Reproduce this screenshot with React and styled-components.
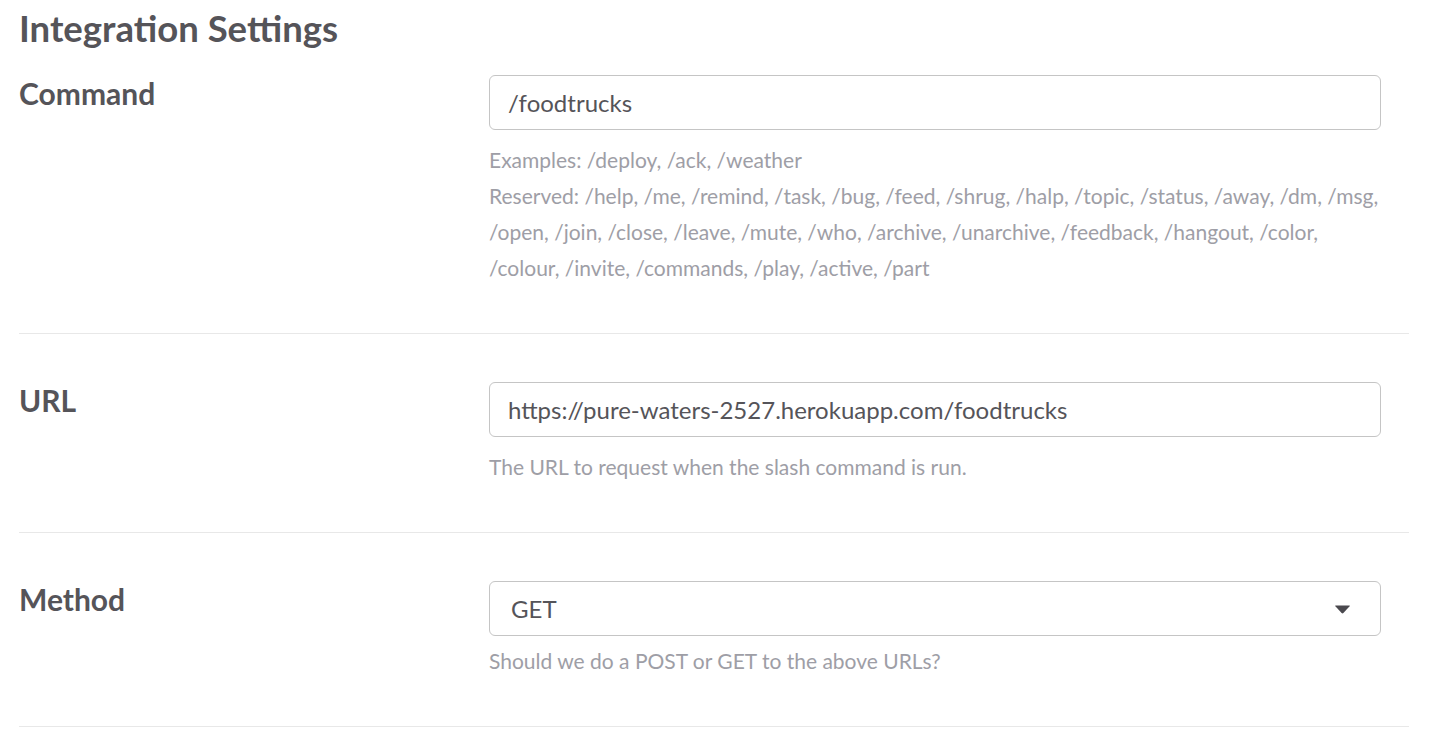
import React from "react";
import styled, { createGlobalStyle } from "styled-components";

const GlobalStyle = createGlobalStyle`
  body {
    margin: 0;
    background: #ffffff;
    font-family: Lato, "Open Sans", "Liberation Sans", sans-serif;
    color: #555459;
  }
`;

const Page = styled.div`
  padding: 6px 20px 0 19px;
`;

const Title = styled.h1`
  margin: 0 0 25px;
  font-size: 36.5px;
  font-weight: 700;
  line-height: normal;
  color: #555459;
`;

const Section = styled.div`
  display: grid;
  grid-template-columns: 470px 1fr;
  padding: ${(p) => (p.first ? "0" : "48px")} 0 47px;
  border-bottom: 1px solid #e8e8e8;
`;

const Label = styled.h2`
  margin: 0;
  font-size: 30px;
  font-weight: 700;
  line-height: normal;
  color: #555459;
`;

const Field = styled.div`
  padding-right: 28px;
  min-width: 0;
`;

const TextInput = styled.input`
  display: block;
  box-sizing: border-box;
  width: 100%;
  height: 55px;
  padding: 0 18px;
  border: 1px solid #c5c5c5;
  border-radius: 6px;
  background: #ffffff;
  font-family: inherit;
  font-size: 24px;
  color: #555459;
  outline: none;
`;

const SelectWrap = styled.div`
  position: relative;
`;

const Select = styled.select`
  display: block;
  box-sizing: border-box;
  width: 100%;
  height: 55px;
  padding: 0 21px;
  border: 1px solid #c5c5c5;
  border-radius: 6px;
  background: #ffffff;
  font-family: inherit;
  font-size: 24px;
  color: #555459;
  appearance: none;
  -webkit-appearance: none;
  outline: none;
`;

const Caret = styled.svg`
  position: absolute;
  right: 30px;
  top: 50%;
  margin-top: -4px;
  width: 17px;
  height: 9px;
  pointer-events: none;
`;

const Help = styled.p`
  margin: ${(p) => (p.tight ? "7px" : "12px")} 0 0;
  font-size: 21px;
  line-height: 36px;
  color: #9e9ea6;
`;

export default function App() {
  return (
    <>
      <GlobalStyle />
      <Page>
        <Title>Integration Settings</Title>

        <Section first>
          <Label>Command</Label>
          <Field>
            <TextInput readOnly value="/foodtrucks" />
            <Help>
              Examples: /deploy, /ack, /weather
              <br />
              Reserved: /help, /me, /remind, /task, /bug, /feed, /shrug, /halp,
              /topic, /status, /away, /dm, /msg, /open, /join, /close, /leave,
              /mute, /who, /archive, /unarchive, /feedback, /hangout, /color,
              /colour, /invite, /commands, /play, /active, /part
            </Help>
          </Field>
        </Section>

        <Section>
          <Label>URL</Label>
          <Field>
            <TextInput
              readOnly
              value="https://pure-waters-2527.herokuapp.com/foodtrucks"
            />
            <Help>The URL to request when the slash command is run.</Help>
          </Field>
        </Section>

        <Section>
          <Label>Method</Label>
          <Field>
            <SelectWrap>
              <Select defaultValue="GET">
                <option value="GET">GET</option>
                <option value="POST">POST</option>
              </Select>
              <Caret viewBox="0 0 18 10">
                <path
                  d="M1.5 0.5 H16.5 Q17.8 0.5 16.9 1.5 L10 9 Q9 10 8 9 L1.1 1.5 Q0.2 0.5 1.5 0.5 Z"
                  fill="#4a494e"
                />
              </Caret>
            </SelectWrap>
            <Help tight>Should we do a POST or GET to the above URLs?</Help>
          </Field>
        </Section>
      </Page>
    </>
  );
}
